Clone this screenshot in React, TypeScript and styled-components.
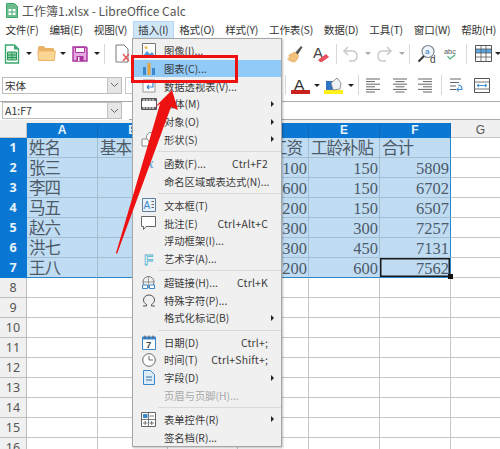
import React from 'react';
import styled, { createGlobalStyle } from 'styled-components';

const GlobalStyle = createGlobalStyle`
  html, body {
    margin: 0;
    padding: 0;
    background: #fff;
    overflow: hidden;
  }
  * { box-sizing: border-box; }
`;

const uiFont = `"Noto Sans CJK SC", "Noto Sans", sans-serif`;

const Page = styled.div`
  position: relative;
  width: 500px;
  height: 449px;
  overflow: hidden;
  background: #fff;
  font-family: ${uiFont};
  color: #444;
`;

const TitleBar = styled.div`
  height: 20px;
  display: flex;
  align-items: center;
  gap: 4px;
  padding: 0 0 0 6px;
  font-size: 12px;
  color: #555;
`;

const MenuBar = styled.div`
  height: 18px;
  display: flex;
  align-items: center;
  letter-spacing: -0.2px;
`;

const MenuTitle = styled.div<{ $active?: boolean }>`
  height: 17px;
  line-height: 15px;
  padding: 0 4.4px;
  font-size: 10.6px;
  color: #333;
  white-space: nowrap;
  background: ${(p) => (p.$active ? '#cfe5f8' : 'transparent')};
  border: 1px solid ${(p) => (p.$active ? '#b5d6f2' : 'transparent')};
  border-bottom: 0;
`;

const Toolbar = styled.div<{ $h: number }>`
  height: ${(p) => p.$h}px;
  display: flex;
  align-items: center;
`;

const LeftGroup = styled.div`
  width: 284px;
  flex: none;
  display: flex;
  align-items: center;
  padding-left: 2px;
`;

const Slot = styled.div<{ $w: number }>`
  width: ${(p) => p.$w}px;
  flex: none;
  display: flex;
  justify-content: center;
  align-items: center;
`;

const ToolSep = styled.div`
  width: 1px;
  height: 20px;
  background: #d8d8d8;
`;

const Caret = styled.div<{ $muted?: boolean }>`
  width: 0;
  height: 0;
  border-left: 3px solid transparent;
  border-right: 3px solid transparent;
  border-top: 3px solid ${(p) => (p.$muted ? '#aaa' : '#222')};
`;

const ComboBox = styled.div`
  width: 120px;
  height: 17px;
  flex: none;
  display: flex;
  border: 1px solid #bdbdbd;
  background: #fff;
  font-size: 10.6px;
  line-height: 15px;
  color: #333;
`;

const ComboText = styled.div`
  flex: 1;
  padding-left: 2px;
`;

const ComboButton = styled.div`
  width: 14px;
  background: #e6e6e6;
  border-left: 1px solid #c4c4c4;
  display: flex;
  align-items: center;
  justify-content: center;
`;

const SmallBox = styled.div`
  width: 20px;
  height: 17px;
  margin-left: 3px;
  border: 1px solid #c8c8c8;
`;

const FormulaBar = styled.div`
  height: 22px;
  background: #f0f0f0;
  padding-bottom: 3px;
  display: flex;
  border-top: 1px solid #aaa;
`;

const FormulaName = styled.div`
  width: 129px;
  flex: none;
  padding: 0 0 0 2px;
  background: #fff;
  display: flex;
  align-items: flex-start;
`;

const FormulaInput = styled.div`
  flex: 1;
  background: #fff;
  border-bottom: 1px solid #aaa;
`;

const Sheet = styled.div`
  display: grid;
  grid-template-columns: 27px 71px 70px 70px 71px 71px 71px 60px;
  grid-template-rows: 15px repeat(16, 20px);
`;

const Corner = styled.div`
  background: #f0f0f0;
  border-right: 1px solid #c4c4c4;
  border-bottom: 1px solid #c4c4c4;
`;

const ColHead = styled.div<{ $sel?: boolean }>`
  display: flex;
  align-items: center;
  justify-content: center;
  font-family: "Liberation Sans", sans-serif;
  font-size: 12px;
  font-weight: ${(p) => (p.$sel ? 700 : 400)};
  background: ${(p) => (p.$sel ? '#0a78d2' : '#f0f0f0')};
  color: ${(p) => (p.$sel ? '#e8f3fc' : '#555')};
  border-right: 1px solid ${(p) => (p.$sel ? '#0a6abb' : '#c4c4c4')};
  border-bottom: 1px solid ${(p) => (p.$sel ? '#0a78d2' : '#c4c4c4')};
`;

const RowHead = styled.div<{ $sel?: boolean }>`
  display: flex;
  align-items: center;
  justify-content: center;
  font-family: "Noto Sans", "Liberation Sans", sans-serif;
  font-size: 12.5px;
  font-weight: ${(p) => (p.$sel ? 700 : 400)};
  background: ${(p) => (p.$sel ? '#0a78d2' : '#f0f0f0')};
  color: ${(p) => (p.$sel ? '#e8f3fc' : '#555')};
  border-right: 1px solid ${(p) => (p.$sel ? '#0a78d2' : '#bdbdbd')};
  border-bottom: 1px solid ${(p) => (p.$sel ? '#0a78d2' : '#bdbdbd')};
`;

const Cell = styled.div<{ $sel?: boolean; $num?: boolean; $cursor?: boolean; $lastRow?: boolean; $lastCol?: boolean }>`
  position: relative;
  padding: ${(p) => (p.$num ? '1px 1px 0 2px' : '1px 2px 0')};
  font-family: "Liberation Serif", "Noto Sans CJK SC", serif;
  font-size: 16.5px;
  line-height: 19px;
  letter-spacing: ${(p) => (p.$num ? '0' : '-1px')};
  white-space: nowrap;
  overflow: hidden;
  text-align: ${(p) => (p.$num ? 'right' : 'left')};
  color: #4d5a68;
  background: ${(p) => (p.$sel ? '#c0dcf3' : '#fff')};
  border-right: 1px solid ${(p) => (p.$lastCol ? '#2b86c9' : p.$sel ? '#a3bdd3' : '#c6c6c6')};
  border-bottom: 1px solid ${(p) => (p.$lastRow ? '#2b86c9' : p.$sel ? '#a3bdd3' : '#c6c6c6')};
  ${(p) => (p.$cursor ? 'box-shadow: inset 0 0 0 1.5px #1a1a1a;' : '')}
`;

const FillHandle = styled.div`
  position: absolute;
  left: 448px;
  top: 274px;
  width: 5px;
  height: 5px;
  background: #111;
`;

const DropMenu = styled.div`
  position: absolute;
  left: 132px;
  top: 38px;
  width: 150px;
  height: 409px;
  padding-top: 3px;
  background: #f0f0f0;
  border: 1px solid #a6a6a6;
  box-shadow: 1px 1px 2px rgba(0, 0, 0, 0.25);
  display: flex;
  flex-direction: column;
`;

const MenuRow = styled.div<{ $hot?: boolean; $off?: boolean }>`
  height: 17.7px;
  flex: none;
  display: flex;
  align-items: center;
  font-size: 10.3px;
  line-height: 17px;
  white-space: nowrap;
  color: ${(p) => (p.$off ? '#a8a8a8' : '#3a3a3a')};
  background: ${(p) => (p.$hot ? '#91c9f7' : 'transparent')};
`;

const MenuIcon = styled.div`
  width: 31px;
  flex: none;
  display: flex;
  align-items: center;
  justify-content: center;
`;

const MenuLabel = styled.div`
  flex: 1;
`;

const Shortcut = styled.div`
  font-size: 10.4px;
  letter-spacing: 0.2px;
  padding-right: 13px;
`;

const SubArrow = styled.div`
  width: 0;
  height: 0;
  margin-right: 7px;
  border-top: 3px solid transparent;
  border-bottom: 3px solid transparent;
  border-left: 3px solid #222;
`;

const MenuSep = styled.div`
  height: 6.5px;
  flex: none;
  margin-left: 25px;
  display: flex;
  align-items: center;
  &::after {
    content: '';
    display: block;
    width: 100%;
    height: 1px;
    background: #d9d9d9;
  }
`;

const RedBox = styled.div`
  position: absolute;
  left: 131px;
  top: 55px;
  width: 107px;
  height: 28px;
  border: 3px solid #ee1111;
`;

const ArrowLayer = styled.svg`
  position: absolute;
  left: 0;
  top: 0;
  pointer-events: none;
`;

/* ---- icons ---- */

const CalcDoc = () => (
  <svg width="16" height="20" viewBox="0 0 16 20">
    <path d="M1.5 1h9l4 4v14h-13z" fill="#fff" stroke="#3aa76d" strokeWidth="1.4" />
    <path d="M10 1l4.5 4.5H10z" fill="#3aa76d" />
    <path d="M3.5 8h9v8h-9z" fill="#8fd0a8" stroke="#2a9a5c" />
    <path d="M3.5 11h9M3.5 13.5h9M8 8v8" stroke="#2a9a5c" />
  </svg>
);

const Folder = () => (
  <svg width="19" height="17" viewBox="0 0 19 17">
    <path d="M1 3c0-1 .5-2 1.500-2h4l2 2h7c1 0 1.500 .5 1.500 1.500V6H1z" fill="#e9b265" />
    <path d="M.8 6h17.500l-1 9.500H1.600z" fill="#fbd594" stroke="#eeb568" />
  </svg>
);

const Floppy = () => (
  <svg width="16" height="16" viewBox="0 0 16 16">
    <path d="M1 1h13l1 1v13H1z" fill="#e6a9e0" stroke="#a9339f" strokeWidth="1.400" />
    <path d="M3.500 1.500h9v5h-9z" fill="#fff" stroke="#a9339f" />
    <path d="M4.500 10h7v5h-7z" fill="#a9339f" />
    <path d="M6 11h1.500v4H6z" fill="#fff" />
  </svg>
);

const PdfDoc = () => (
  <svg width="16" height="19" viewBox="0 0 16 19">
    <path d="M1 1h8l4 4v13H1z" fill="#fff" stroke="#7a7a7a" />
    <path d="M8 10l6 7M14 10l-6 7" stroke="#e45b5b" strokeWidth="1.500" />
  </svg>
);

const Brush = () => (
  <svg width="18" height="20" viewBox="0 0 18 20">
    <path d="M9 9l6-7 1.500 1.300L11.500 11z" fill="#555" />
    <path d="M3 11l6-3 3.500 3.500c-.5 3-2 5.500-4 6.500-2.500 0-6-1.500-7-3 1 0 2.500-1 1.500-4z" fill="#f2c078" stroke="#dba052" strokeWidth=".6" />
  </svg>
);

const ClearFormat = () => (
  <svg width="18" height="18" viewBox="0 0 18 18">
    <text x="1" y="13" fontFamily="Liberation Sans, sans-serif" fontSize="15" fill="#444">A</text>
    <path d="M6 15l8-6 3 3-7 5H8z" fill="#e8505b" />
  </svg>
);

const ArcArrow = ({ flip }: { flip?: boolean }) => (
  <svg width="17" height="16" viewBox="0 0 17 16" style={flip ? { transform: 'scaleX(-1)' } : undefined}>
    <path d="M2 5h8c3 0 5 2 5 5s-2 5-5 5H7" fill="none" stroke="#c9c9c9" strokeWidth="1.500" />
    <path d="M6 1L2 5l4 4" fill="none" stroke="#c9c9c9" strokeWidth="1.500" />
  </svg>
);

const FindIcon = () => (
  <svg width="20" height="20" viewBox="0 0 20 20">
    <circle cx="11" cy="7.500" r="6" fill="#eef5fb" stroke="#7f8e9a" strokeWidth="1.200" />
    <path d="M7 12l-5.500 5.500" stroke="#333" strokeWidth="2" />
    <text x="8" y="10" fontFamily="Liberation Sans, sans-serif" fontSize="8" fill="#2f78c0">a</text>
    <text x="13" y="19" fontFamily="Liberation Sans, sans-serif" fontSize="10" fill="#444">d</text>
  </svg>
);

const SpellIcon = () => (
  <svg width="20" height="20" viewBox="0 0 20 20">
    <text x="0" y="10" fontFamily="Liberation Sans, sans-serif" fontSize="10.500" fill="#555">abc</text>
    <path d="M5 13l3.500 4L16 11" fill="none" stroke="#4fae7c" strokeWidth="1.800" />
  </svg>
);

const TableIcon = () => (
  <svg width="17" height="17" viewBox="0 0 17 17">
    <path d="M.5 .5h16v16H.5z" fill="#fff" stroke="#555" />
    <path d="M1 4h15v4H1z" fill="#5aa9e6" />
    <path d="M.5 4h16M.5 8h16M.5 12h16M6 .5v16M11 .5v16" stroke="#555" strokeWidth=".8" />
  </svg>
);

const FontColor = () => (
  <svg width="19" height="17" viewBox="0 0 19 17">
    <text x="3" y="12.500" fontFamily="Liberation Sans, sans-serif" fontSize="15.500" fill="#333">A</text>
    <path d="M0 13h19v4H0z" fill="#c9211e" />
  </svg>
);

const Highlight = () => (
  <svg width="19" height="17" viewBox="0 0 19 17">
    <path d="M0 13h19v4H0z" fill="#ffef1a" />
    <path d="M2 4h8v9H2z" fill="#2e76c2" />
    <path d="M7 6l6-5 4 5-1 6-7 1z" fill="#eef2f7" stroke="#777" strokeWidth=".8" />
  </svg>
);

const AlignLines = ({ mode }: { mode: 'left' | 'center' | 'right' }) => {
  const widths = [14, 9, 14, 9, 14, 9];
  return (
    <svg width="14" height="15" viewBox="0 0 14 15">
      {widths.map((w, i) => {
        const x = mode === 'left' ? 0 : mode === 'right' ? 14 - w : (14 - w) / 2;
        return <path key={i} d={`M${x} ${i * 2.6 + 1}h${w}`} stroke="#666" strokeWidth="1" />;
      })}
    </svg>
  );
};

const WrapIcon = () => (
  <svg width="15" height="15" viewBox="0 0 15 15">
    <path d="M0 1h11M0 4.500h9M0 8h6M0 11.500h6" stroke="#666" />
    <path d="M8 7c3 0 4 2 4 4.500H7" fill="none" stroke="#3f8fd0" strokeWidth="1.200" />
    <path d="M9 13.500l-2.500-2 2.500-2" fill="none" stroke="#3f8fd0" />
  </svg>
);

const MergeIcon = () => (
  <svg width="16" height="15" viewBox="0 0 16 15">
    <path d="M.5 .5h15v14H.5z" fill="#fff" stroke="#555" />
    <path d="M.5 4h15M.5 11h15" stroke="#777" />
    <path d="M3 7.500h10M3 7.500l2-1.500M3 7.500l2 1.500M13 7.500l-2-1.500M13 7.500l-2 1.500" stroke="#3f8fd0" />
  </svg>
);

const Chevron = () => (
  <svg width="9" height="6" viewBox="0 0 9 6">
    <path d="M1 1l3.500 3.500L8 1" fill="none" stroke="#666" />
  </svg>
);

const menuIcons: Record<string, React.ReactNode> = {
  image: (
    <svg width="14" height="15" viewBox="0 0 14 15">
      <path d="M.5 .5h13v14H.5z" fill="#fff" stroke="#777" />
      <circle cx="4" cy="4.500" r="1.500" fill="#f0b85a" />
      <path d="M1 13l4-5 3 3 2-2 3 4z" fill="#4d98d8" />
    </svg>
  ),
  chart: (
    <svg width="14" height="14" viewBox="0 0 14 14">
      <path d="M1 5h3v8H1z" fill="#3b87cc" />
      <path d="M5.500 1h3v12h-3z" fill="#e9a33c" />
      <path d="M10 6h3v7h-3z" fill="#3b87cc" />
    </svg>
  ),
  pivot: (
    <svg width="14" height="14" viewBox="0 0 14 14">
      <path d="M1 1h12v12H1z" fill="#fff" stroke="#999" />
      <path d="M11 4v4H5M5 8l2-2M5 8l2 2" fill="none" stroke="#3b87cc" strokeWidth="1.200" />
    </svg>
  ),
  film: (
    <svg width="16" height="12" viewBox="0 0 16 12">
      <path d="M.5 .5h15v11H.5z" fill="#fff" stroke="#555" />
      <path d="M1 1h14v2H1zM1 9h14v2H1z" fill="#666" />
      <path d="M3 1v2M6 1v2M9 1v2M12 1v2M3 9v2M6 9v2M9 9v2M12 9v2" stroke="#fff" />
    </svg>
  ),
  shapes: (
    <svg width="16" height="15" viewBox="0 0 16 15">
      <path d="M1 7h7v7H1z" fill="#fff" stroke="#888" />
      <circle cx="10" cy="5" r="4.500" fill="#fff" stroke="#888" />
    </svg>
  ),
  fx: (
    <svg width="16" height="14" viewBox="0 0 16 14">
      <text x="1" y="12" fontFamily="Liberation Serif, serif" fontStyle="italic" fontSize="14" fontWeight="700" fill="#6fa8d8">fx</text>
    </svg>
  ),
  textbox: (
    <svg width="14" height="14" viewBox="0 0 14 14">
      <path d="M.5 .5h13v13H.5z" fill="#eaf3fb" stroke="#5b7f9e" />
      <text x="1.500" y="11" fontFamily="Liberation Sans, sans-serif" fontSize="10" fill="#3b87cc">A</text>
      <path d="M9.500 3.500h2.500M9.500 6.500h2.500M9.500 9.500h2.500" stroke="#666" />
    </svg>
  ),
  comment: (
    <svg width="15" height="15" viewBox="0 0 15 15">
      <path d="M.5 .5h14v10H5l-2.500 3v-3h-2z" fill="#fff" stroke="#666" />
    </svg>
  ),
  fontwork: (
    <svg width="12" height="15" viewBox="0 0 12 15">
      <text x="1" y="13.500" fontFamily="Liberation Sans, sans-serif" fontSize="15" fontWeight="700" fill="#e6f4fa" stroke="#58b1cf" strokeWidth=".8">F</text>
    </svg>
  ),
  link: (
    <svg width="15" height="14" viewBox="0 0 15 14">
      <circle cx="7.500" cy="6" r="5.500" fill="none" stroke="#777" />
      <path d="M2 6h11M7.500 .5v11" stroke="#777" strokeWidth=".7" />
      <path d="M1.500 9h5v3.500h-5zM8.500 9h5v3.500h-5z" fill="#fff" stroke="#3b87cc" />
    </svg>
  ),
  omega: (
    <svg width="14" height="13" viewBox="0 0 14 13">
      <path d="M1 12h3.500V10.500C2.500 9.500 1.500 7.800 1.500 6c0-3 2.500-5 5.500-5s5.500 2 5.500 5c0 1.800-1 3.500-3 4.500V12H13" fill="none" stroke="#555" />
    </svg>
  ),
  calendar: (
    <svg width="14" height="15" viewBox="0 0 14 15">
      <path d="M.5 2h13v12.500H.5z" fill="#fff" stroke="#3b87cc" />
      <path d="M1 2h12v2.500H1z" fill="#3b87cc" />
      <path d="M3 .5v3M7 .5v3M11 .5v3" stroke="#555" />
      <text x="4" y="13" fontFamily="Liberation Sans, sans-serif" fontSize="9.500" fontWeight="700" fill="#444">7</text>
    </svg>
  ),
  clock: (
    <svg width="14" height="14" viewBox="0 0 14 14">
      <circle cx="7" cy="7" r="6.300" fill="#fff" stroke="#666" />
      <path d="M7 3v4h4" fill="none" stroke="#666" />
    </svg>
  ),
  field: (
    <svg width="12" height="15" viewBox="0 0 12 15">
      <path d="M.5 .5h7l4 4v10H.5z" fill="#dcecf9" stroke="#3b87cc" />
      <path d="M3 7h6M3 10h6" stroke="#3b6f9e" />
    </svg>
  ),
  form: (
    <svg width="15" height="15" viewBox="0 0 15 15">
      <path d="M.5 .5h14v14H.5z" fill="#fff" stroke="#666" />
      <path d="M2 2h4.500v4H2z" fill="#3b87cc" />
      <path d="M8.500 4h4.500M2 11h4.500M8.500 11h4.500M10.700 9v4M4.200 9v4M7.500 0v15M0 7.500h15" stroke="#555" strokeWidth=".8" />
    </svg>
  ),
};

type MenuEntry =
  | 'sep'
  | { label: string; icon?: string; key?: string; sub?: boolean; hot?: boolean; off?: boolean };

const insertMenu: MenuEntry[] = [
  { label: '图像(I)...', icon: 'image' },
  { label: '图表(C)...', icon: 'chart', hot: true },
  { label: '数据透视表(V)...', icon: 'pivot' },
  { label: '媒体(M)', icon: 'film', sub: true },
  { label: '对象(O)', sub: true },
  { label: '形状(S)', icon: 'shapes', sub: true },
  'sep',
  { label: '函数(F)...', icon: 'fx', key: 'Ctrl+F2' },
  { label: '命名区域或表达式(N)...' },
  'sep',
  { label: '文本框(T)', icon: 'textbox' },
  { label: '批注(E)', icon: 'comment', key: 'Ctrl+Alt+C' },
  { label: '浮动框架(I)...' },
  { label: '艺术字(A)...', icon: 'fontwork' },
  'sep',
  { label: '超链接(H)...', icon: 'link', key: 'Ctrl+K' },
  { label: '特殊字符(P)...', icon: 'omega' },
  { label: '格式化标记(B)', sub: true },
  'sep',
  { label: '日期(D)', icon: 'calendar', key: 'Ctrl+;' },
  { label: '时间(T)', icon: 'clock', key: 'Ctrl+Shift+;' },
  { label: '字段(D)', icon: 'field', sub: true },
  { label: '页眉与页脚(H)...', off: true },
  'sep',
  { label: '表单控件(R)', icon: 'form', sub: true },
  { label: '签名档(R)...' },
];

const topMenus = ['文件(F)', '编辑(E)', '视图(V)', '插入(I)', '格式(O)', '样式(Y)', '工作表(S)', '数据(D)', '工具(T)', '窗口(W)', '帮助(H)'];

const columns = ['A', 'B', 'C', 'D', 'E', 'F', 'G'];

// only the digits that show beside the open menu are filled in for D
const rows: string[][] = [
  ['姓名', '基本', '', '岗位工资', '工龄补贴', '合计'],
  ['张三', '', '', '100', '150', '5809'],
  ['李四', '', '', '600', '150', '6702'],
  ['马五', '', '', '200', '150', '6507'],
  ['赵六', '', '', '300', '300', '7257'],
  ['洪七', '', '', '300', '450', '7131'],
  ['王八', '', '', '200', '600', '7562'],
];

const totalRows = 16;

const App = () => {
  return (
    <Page>
      <GlobalStyle />
      <TitleBar>
        <svg width="12" height="15" viewBox="0 0 12 15">
          <path d="M.5 .5h8l3 3v11H.5z" fill="#6dbb8c" stroke="#3aa76d" />
          <path d="M2.500 6h7v6h-7z" fill="#fff" />
          <path d="M2.500 9h7M6 6v6" stroke="#3aa76d" />
        </svg>
        工作簿1.xlsx - LibreOffice Calc
      </TitleBar>

      <MenuBar>
        {topMenus.map((m) => (
          <MenuTitle key={m} $active={m === '插入(I)'}>
            {m}
          </MenuTitle>
        ))}
      </MenuBar>

      <Toolbar $h={31}>
        <LeftGroup>
          <Slot $w={20}><CalcDoc /></Slot>
          <Slot $w={14}><Caret /></Slot>
          <Slot $w={20}><Folder /></Slot>
          <Slot $w={14}><Caret /></Slot>
          <Slot $w={20}><Floppy /></Slot>
          <Slot $w={13}><Caret /></Slot>
          <Slot $w={2}><ToolSep /></Slot>
          <Slot $w={36}><PdfDoc /></Slot>
        </LeftGroup>
        <Slot $w={22}><Brush /></Slot>
        <Slot $w={30}><ClearFormat /></Slot>
        <Slot $w={1}><ToolSep /></Slot>
        <Slot $w={26}><ArcArrow /></Slot>
        <Slot $w={10}><Caret $muted /></Slot>
        <Slot $w={22}><ArcArrow flip /></Slot>
        <Slot $w={14}><Caret $muted /></Slot>
        <Slot $w={1}><ToolSep /></Slot>
        <Slot $w={34}><FindIcon /></Slot>
        <Slot $w={14}><SpellIcon /></Slot>
        <Slot $w={16}><ToolSep /></Slot>
        <Slot $w={18}><TableIcon /></Slot>
        <Slot $w={12}><Caret /></Slot>
      </Toolbar>

      <Toolbar $h={32}>
        <LeftGroup>
          <ComboBox>
            <ComboText>宋体</ComboText>
            <ComboButton><Chevron /></ComboButton>
          </ComboBox>
          <SmallBox />
        </LeftGroup>
        <Slot $w={2}><ToolSep /></Slot>
        <Slot $w={28}><FontColor /></Slot>
        <Slot $w={6}><Caret /></Slot>
        <Slot $w={26}><Highlight /></Slot>
        <Slot $w={10}><Caret /></Slot>
        <Slot $w={4}><ToolSep /></Slot>
        <Slot $w={26}><AlignLines mode="left" /></Slot>
        <Slot $w={28}><AlignLines mode="center" /></Slot>
        <Slot $w={22}><AlignLines mode="right" /></Slot>
        <Slot $w={10}><ToolSep /></Slot>
        <Slot $w={22}><WrapIcon /></Slot>
        <Slot $w={28}><MergeIcon /></Slot>
      </Toolbar>

      <FormulaBar>
        <FormulaName>
          <ComboBox>
            <ComboText>A1:F7</ComboText>
            <ComboButton><Chevron /></ComboButton>
          </ComboBox>
        </FormulaName>
        <FormulaInput />
      </FormulaBar>

      <Sheet>
        <Corner />
        {columns.map((c) => (
          <ColHead key={c} $sel={c !== 'G'}>{c}</ColHead>
        ))}
        {Array.from({ length: totalRows }, (_, r) => {
          const sel = r < rows.length;
          return (
            <React.Fragment key={r}>
              <RowHead $sel={sel}>{r + 1}</RowHead>
              {columns.map((c, i) => {
                const text = sel && i < 6 ? rows[r][i] : '';
                return (
                  <Cell
                    key={c}
                    $sel={sel && i < 6}
                    $num={/^\d+$/.test(text)}
                    $cursor={r === 6 && i === 5}
                    $lastRow={r === 6 && i < 6}
                    $lastCol={sel && i === 5}
                  >
                    {text}
                  </Cell>
                );
              })}
            </React.Fragment>
          );
        })}
      </Sheet>
      <FillHandle />

      <DropMenu>
        {insertMenu.map((item, i) =>
          item === 'sep' ? (
            <MenuSep key={i} />
          ) : (
            <MenuRow key={i} $hot={item.hot} $off={item.off}>
              <MenuIcon>{item.icon ? menuIcons[item.icon] : null}</MenuIcon>
              <MenuLabel>{item.label}</MenuLabel>
              {item.key ? <Shortcut>{item.key}</Shortcut> : null}
              {item.sub ? <SubArrow /> : null}
            </MenuRow>
          ),
        )}
      </DropMenu>

      <RedBox />
      <ArrowLayer width="500" height="449" viewBox="0 0 500 449">
        <polygon points="172,90 178,110 171,107 117,254 116,253 160,104 155,107" fill="#ee1111" />
      </ArrowLayer>
    </Page>
  );
};

export default App;
